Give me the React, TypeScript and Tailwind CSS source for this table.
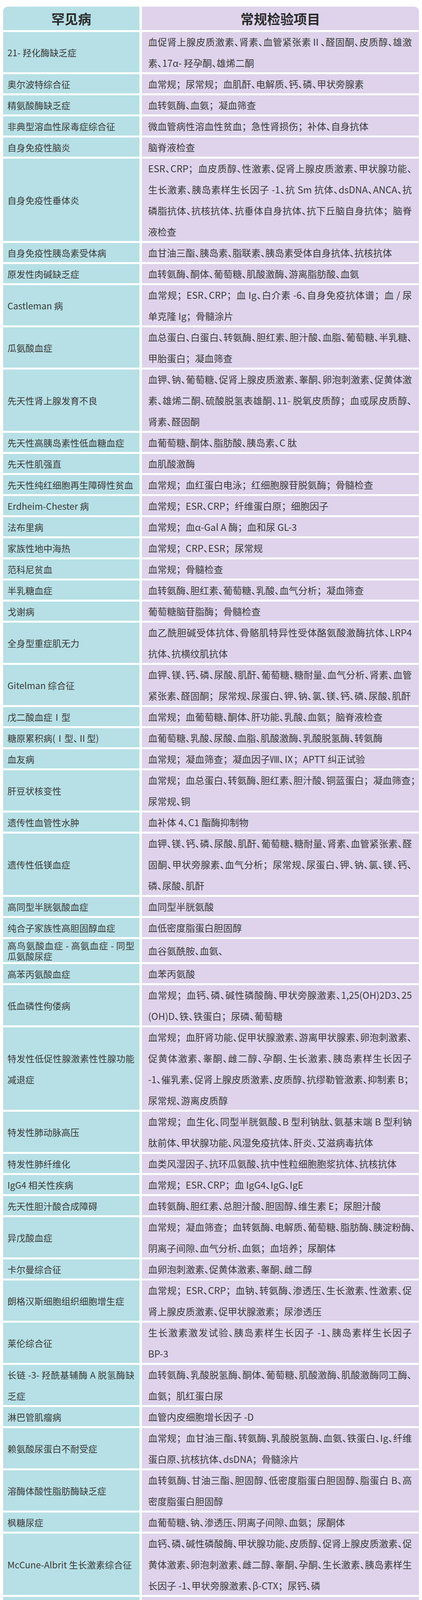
import { Fragment } from "react";
import clsx from "clsx";

type Row = { name: string[]; items: string[]; tight?: boolean; narrow?: boolean };

const rows: Row[] = [
  { name: ["21- 羟化酶缺乏症"], items: ["血促肾上腺皮质激素、肾素、血管紧张素Ⅱ、醛固酮、皮质醇、雄激", "素、17α- 羟孕酮、雄烯二酮"] },
  { name: ["奥尔波特综合征"], items: ["血常规；尿常规；血肌酐、电解质、钙、磷、甲状旁腺素"] },
  { name: ["精氨酸酶缺乏症"], items: ["血转氨酶、血氨；凝血筛查"] },
  { name: ["非典型溶血性尿毒症综合征"], items: ["微血管病性溶血性贫血；急性肾损伤；补体、自身抗体"] },
  { name: ["自身免疫性脑炎"], items: ["脑脊液检查"] },
  {
    name: ["自身免疫性垂体炎"],
    items: [
      "ESR、CRP；血皮质醇、性激素、促肾上腺皮质激素、甲状腺功能、",
      "生长激素、胰岛素样生长因子 -1、抗 Sm 抗体、dsDNA、ANCA、抗",
      "磷脂抗体、抗核抗体、抗垂体自身抗体、抗下丘脑自身抗体；脑脊",
      "液检查",
    ],
  },
  { name: ["自身免疫性胰岛素受体病"], items: ["血甘油三酯、胰岛素、脂联素、胰岛素受体自身抗体、抗核抗体"] },
  { name: ["原发性肉碱缺乏症"], items: ["血转氨酶、酮体、葡萄糖、肌酸激酶、游离脂肪酸、血氨"] },
  { name: ["Castleman 病"], items: ["血常规；ESR、CRP；血 Ig、白介素 -6、自身免疫抗体谱；血 / 尿", "单克隆 Ig；骨髓涂片"] },
  { name: ["瓜氨酸血症"], items: ["血总蛋白、白蛋白、转氨酶、胆红素、胆汁酸、血脂、葡萄糖、半乳糖、", "甲胎蛋白；凝血筛查"] },
  {
    name: ["先天性肾上腺发育不良"],
    items: [
      "血钾、钠、葡萄糖、促肾上腺皮质激素、睾酮、卵泡刺激素、促黄体激",
      "素、雄烯二酮、硫酸脱氢表雄酮、11- 脱氧皮质醇；血或尿皮质醇、",
      "肾素、醛固酮",
    ],
  },
  { name: ["先天性高胰岛素性低血糖血症"], items: ["血葡萄糖、酮体、脂肪酸、胰岛素、C 肽"] },
  { name: ["先天性肌强直"], items: ["血肌酸激酶"] },
  { name: ["先天性纯红细胞再生障碍性贫血"], items: ["血常规；血红蛋白电泳；红细胞腺苷脱氨酶；骨髓检查"] },
  { name: ["Erdheim-Chester 病"], items: ["血常规；ESR、CRP；纤维蛋白原；细胞因子"] },
  { name: ["法布里病"], items: ["血常规；血α-Gal A 酶；血和尿 GL-3"] },
  { name: ["家族性地中海热"], items: ["血常规；CRP、ESR；尿常规"] },
  { name: ["范科尼贫血"], items: ["血常规；骨髓检查"] },
  { name: ["半乳糖血症"], items: ["血转氨酶、胆红素、葡萄糖、乳酸、血气分析；凝血筛查"] },
  { name: ["戈谢病"], items: ["葡萄糖脑苷脂酶；骨髓检查"] },
  { name: ["全身型重症肌无力"], items: ["血乙酰胆碱受体抗体、骨骼肌特异性受体酪氨酸激酶抗体、LRP4", "抗体、抗横纹肌抗体"] },
  {
    name: ["Gitelman 综合征"],
    items: [
      "血钾、镁、钙、磷、尿酸、肌酐、葡萄糖、糖耐量、血气分析、肾素、血管",
      "紧张素、醛固酮；尿常规、尿蛋白、钾、钠、氯、镁、钙、磷、尿酸、肌酐",
    ],
  },
  { name: ["戊二酸血症Ⅰ型"], items: ["血常规；血葡萄糖、酮体、肝功能、乳酸、血氨；脑脊液检查"] },
  { name: ["糖原累积病(Ⅰ型、Ⅱ型)"], items: ["血葡萄糖、乳酸、尿酸、血脂、肌酸激酶、乳酸脱氢酶、转氨酶"] },
  { name: ["血友病"], items: ["血常规；凝血筛查；凝血因子Ⅷ、Ⅸ；APTT 纠正试验"] },
  { name: ["肝豆状核变性"], items: ["血常规；血总蛋白、转氨酶、胆红素、胆汁酸、铜蓝蛋白；凝血筛查；", "尿常规、铜"] },
  { name: ["遗传性血管性水肿"], items: ["血补体 4、C1 酯酶抑制物"] },
  {
    name: ["遗传性低镁血症"],
    items: [
      "血钾、镁、钙、磷、尿酸、肌酐、葡萄糖、糖耐量、肾素、血管紧张素、醛",
      "固酮、甲状旁腺素、血气分析；尿常规、尿蛋白、钾、钠、氯、镁、钙、",
      "磷、尿酸、肌酐",
    ],
  },
  { name: ["高同型半胱氨酸血症"], items: ["血同型半胱氨酸"] },
  { name: ["纯合子家族性高胆固醇血症"], items: ["血低密度脂蛋白胆固醇"] },
  { name: ["高鸟氨酸血症 - 高氨血症 - 同型", "瓜氨酸尿症"], items: ["血谷氨酰胺、血氨、"], tight: true },
  { name: ["高苯丙氨酸血症"], items: ["血苯丙氨酸"] },
  { name: ["低血磷性佝偻病"], items: ["血常规；血钙、磷、碱性磷酸酶、甲状旁腺激素、1,25(OH)2D3、25", "(OH)D、铁、铁蛋白；尿磷、葡萄糖"] },
  {
    name: ["特发性低促性腺激素性性腺功能", "减退症"],
    items: [
      "血常规；血肝肾功能、促甲状腺激素、游离甲状腺素、卵泡刺激素、",
      "促黄体激素、睾酮、雌二醇、孕酮、生长激素、胰岛素样生长因子",
      "-1、催乳素、促肾上腺皮质激素、皮质醇、抗缪勒管激素、抑制素 B；",
      "尿常规、游离皮质醇",
    ],
  },
  {
    name: ["特发性肺动脉高压"],
    items: ["血常规；血生化、同型半胱氨酸、B 型利钠肽、氨基末端 B 型利钠", "肽前体、甲状腺功能、风湿免疫抗体、肝炎、艾滋病毒抗体"],
  },
  { name: ["特发性肺纤维化"], items: ["血类风湿因子、抗环瓜氨酸、抗中性粒细胞胞浆抗体、抗核抗体"] },
  { name: ["IgG4 相关性疾病"], items: ["血常规；ESR、CRP；血 IgG4、IgG、IgE"] },
  { name: ["先天性胆汁酸合成障碍"], items: ["血转氨酶、胆红素、总胆汁酸、胆固醇、维生素 E；尿胆汁酸"] },
  {
    name: ["异戊酸血症"],
    items: ["血常规；凝血筛查；血转氨酶、电解质、葡萄糖、脂肪酶、胰淀粉酶、", "阴离子间隙、血气分析、血氨；血培养；尿酮体"],
  },
  { name: ["卡尔曼综合征"], items: ["血卵泡刺激素、促黄体激素、睾酮、雌二醇"] },
  {
    name: ["朗格汉斯细胞组织细胞增生症"],
    items: ["血常规；ESR、CRP；血钠、转氨酶、渗透压、生长激素、性激素、促", "肾上腺皮质激素、促甲状腺激素；尿渗透压"],
  },
  { name: ["莱伦综合征"], items: ["生长激素激发试验、胰岛素样生长因子 -1、胰岛素样生长因子", "BP-3"] },
  {
    name: ["长链 -3- 羟酰基辅酶 A 脱氢酶缺", "乏症"],
    items: ["血转氨酶、乳酸脱氢酶、酮体、葡萄糖、肌酸激酶、肌酸激酶同工酶、", "血氨；肌红蛋白尿"],
  },
  { name: ["淋巴管肌瘤病"], items: ["血管内皮细胞增长因子 -D"] },
  {
    name: ["赖氨酸尿蛋白不耐受症"],
    items: ["血常规；血甘油三酯、转氨酶、乳酸脱氢酶、血氨、铁蛋白、Ig、纤维", "蛋白原、抗核抗体、dsDNA；骨髓涂片"],
  },
  {
    name: ["溶酶体酸性脂肪酶缺乏症"],
    items: ["血转氨酶、甘油三酯、胆固醇、低密度脂蛋白胆固醇、脂蛋白 B、高", "密度脂蛋白胆固醇"],
  },
  { name: ["枫糖尿症"], items: ["血葡萄糖、钠、渗透压、阴离子间隙、血氨；尿酮体"] },
  {
    name: ["McCune-Albrit 生长激素综合征"],
    items: [
      "血钙、磷、碱性磷酸酶、甲状腺功能、皮质醇、促肾上腺皮质激素、促",
      "黄体激素、卵泡刺激素、雌二醇、睾酮、孕酮、生长激素、胰岛素样生",
      "长因子 -1、甲状旁腺激素、β-CTX；尿钙、磷",
    ],
  },
  { name: ["中链酰基辅酶 A 脱氢酶缺乏症"], items: ["血转氨酶、肌酸激酶、酮体、葡萄糖、血氨"] },
  {
    name: ["甲基丙二酸血症"],
    items: ["血和尿常规；血肝肾功能、同型半胱氨酸、血气分析、血氨、葡萄糖、", "电解质、血脂、白蛋白"],
  },
  { name: ["线粒体脑肌病"], items: ["血乳酸、丙酮酸"] },
  {
    name: ["多灶性运动神经病"],
    items: ["ESR；血和脑脊液抗神经节苷脂抗体；脑脊液检查；血 ANCA、", "抗核抗体、ENA、甲状腺功能、ACE"],
  },
  { name: ["多种酰基辅酶 A 脱氢酶缺乏症"], items: ["血酮体、葡萄糖、血氨、肌酸激酶、转氨酶；凝血筛查"] },
  { name: ["多发性硬化"], items: ["脑脊液检查"] },
  { name: ["强直性肌营养不良"], items: ["血葡萄糖、肌酸激酶、钙、磷、甲状腺功能、性激素"] },
  { name: ["N- 乙酰谷氨酸合成酶缺乏症"], items: ["血葡萄糖、转氨酶、肌酐、尿素、血氨、血气分析"] },
  { name: ["新生儿糖尿病"], items: ["血葡萄糖、胰岛素、C 肽、渗透压、电解质；尿常规"] },
  { name: ["视神经脊髓炎"], items: ["血特异性水通道蛋白 4 IgG"] },
  {
    name: ["尼曼匹克病"],
    items: ["血常规；血转氨酶、甘油三酯、高密度脂蛋白胆固醇、低密度脂蛋", "白胆固醇、酸性鞘磷脂酶、壳三糖苷酶"],
  },
  { name: ["鸟氨酸氨甲酰基转移酶缺乏症"], items: ["血氨"] },
  { name: ["帕金森病(青年型、早发型)"], items: ["血常规；血铜蓝蛋白、铁蛋白"] },
  {
    name: ["阵发性睡眠性血红蛋白尿症"],
    items: [
      "血常规；血乳酸脱氢酶、胆红素、结合珠蛋白、铁；骨髓检查；酸",
      "化血清溶血试验、糖水溶血试验、蛇毒因子溶血试验、补体溶血敏",
      "感试验；GPI 锚连蛋白、气单胞菌溶素前体的变异体",
    ],
  },
  { name: ["苯丙酮尿症"], items: ["血苯丙氨酸"] },
  { name: ["POEMS 综合征"], items: ["血蛋白电泳、游离轻链；血 / 尿免疫固定电泳；骨髓检查"] },
  { name: ["卟啉病"], items: ["尿卟胆原；红细胞内原卟啉测定"] },
  {
    name: ["普拉德 - 威利综合征"],
    items: [
      "血常规；血肝肾功能、尿酸、血脂、葡萄糖、糖化血红蛋白、胰岛素、",
      "甲状腺功能、胰岛素样生长因子 -1、皮质醇、促肾上腺皮质激素、",
      "睾酮、雌二醇、促黄体激素、卵泡刺激素",
    ],
  },
  { name: ["原发性联合免疫缺陷病"], items: ["血常规；血淋巴细胞分型、Ig、T 细胞受体重排删除环"] },
  { name: ["原发性遗传性肌张力不全"], items: ["血铜蓝蛋白"] },
  { name: ["原发性轻链型淀粉样变"], items: ["单克隆 Ig 鉴定"] },
  { name: ["进行性家族性肝内胆汁淤积症"], items: ["血胆固醇、转氨酶、胆红素、胆汁酸、碱性磷酸酶、甲胎蛋白"] },
  { name: ["Duchenne/Becker 型肌营养不良"], items: ["血转氨酶、肌酸激酶、乳酸脱氢酶、羟丁酸脱氢酶、肌红蛋白"] },
  { name: ["丙酸血症"], items: ["血常规；血葡萄糖、心肌酶、乳酸、血氨、血气分析；尿酮体"] },
  { name: ["肺泡蛋白沉积症"], items: ["血乳酸脱氢酶、癌胚抗原、细胞角蛋白 19、黏蛋白 KL-6"] },
  {
    name: ["囊性纤维化"],
    items: [
      "血常规；血钠、氯、葡萄糖、肝功能、IgE、曲霉菌特异性 IgE、维生",
      "素 A、维生素 D；汗液氯；粪便弹性蛋白酶、脂肪苏丹Ⅲ染色；呼",
      "吸道病原体检查；精液分析",
    ],
  },
  { name: ["重症先天性粒细胞缺乏症"], items: ["血常规；骨髓检查"] },
  {
    name: ["镰刀型细胞贫血病"],
    items: ["血常规；骨髓检查；血胆红素、乳酸脱氢酶、结合珠蛋白、游离血", "红蛋白；血红蛋白电泳；红细胞渗透脆性"],
  },
  { name: ["拉塞尔 - 西尔弗综合征"], items: ["血葡萄糖"] },
  { name: ["谷固醇血症"], items: ["血常规、血细胞形态；血胆固醇"] },
  {
    name: ["脊髓延髓肌萎缩症"],
    items: ["血肌酸肌酶、乳酸脱氢酶、睾酮、孕酮、促卵泡激素、促黄体激素；", "脑脊液检查"],
  },
  { name: ["脊髓性肌萎缩症"], items: ["血肌酸激酶"] },
  { name: ["系统性硬化症"], items: ["抗核抗体、抗着丝点抗体、抗拓扑异构酶Ⅰ抗体、抗 RNA 聚合酶", "Ⅲ抗体"] },
  { name: ["四氢生物喋呤缺乏症"], items: ["血苯丙氨酸"] },
  {
    name: ["酪氨酸血症"],
    items: ["血常规；血白蛋白、胆红素、转氨酶、磷、碱性磷酸酶、甲胎蛋白；", "尿常规；凝血筛查；凝血因子 II、VII、IX、XI"],
  },
  {
    name: ["极长链酰基辅酶 A 脱氢酶缺乏症"],
    items: ["血转氨酶、乳酸脱氢酶、酮体、葡萄糖、肌酸激酶、肌酸激酶同工酶；", "肌红蛋白尿、尿常规"],
  },
  { name: ["威廉姆斯综合征"], items: ["血钙、离子钙、甲状腺功能；尿钙、肌酐"] },
  { name: ["湿疹 - 血小板减少 - 免疫缺陷综合征"], items: ["血常规；血 Ig、细胞免疫"], narrow: true },
  { name: ["X 连锁肾上腺脑白质营养不良"], items: ["血促肾上腺皮质激素、皮质醇；尿皮质醇、17- 羟皮质醇"] },
  { name: ["X 连锁无丙种球蛋白血症"], items: ["血 IgG、IgA、CD19+B 淋巴细胞"] },
  { name: ["X 连锁淋巴增生症"], items: ["血常规；血 T、B 细胞数、IgG、IgM"] },
];

// the source font sets the enumeration comma at half width
function Txt({ text }: { text: string }) {
  const parts = text.split("、");
  return (
    <>
      {parts.map((p, i) => (
        <Fragment key={i}>
          {p}
          {i < parts.length - 1 && <span className="tracking-[-0.5em]">、</span>}
        </Fragment>
      ))}
    </>
  );
}

function Lines({ lines }: { lines: string[] }) {
  return (
    <>
      {lines.map((l, i) => (
        <div
          key={i}
          className={clsx("whitespace-nowrap", i < lines.length - 1 && "text-justify [text-align-last:justify]")}
        >
          <Txt text={l} />
        </div>
      ))}
    </>
  );
}

function TableRow({ row, last }: { row: Row; last: boolean }) {
  return (
    <div className="grid grid-cols-[349px_709px] gap-x-[6px]">
      <div
        className={clsx(
          "flex items-center bg-[#b6e0e5] pl-[11px] pr-[13px] text-[23px]",
          row.tight && "py-[2.5px]",
          last && "rounded-bl-[12px]"
        )}
      >
        <div
          className={clsx(
            "w-full",
            row.tight ? "leading-[27px]" : "-my-[2.5px] leading-[54px]",
            row.narrow && "tracking-[-0.05em]"
          )}
        >
          <Lines lines={row.name} />
        </div>
      </div>
      <div className={clsx("flex items-center bg-[#ded3eb] pl-4 pr-[18px] text-[24px]", last && "rounded-br-[12px]")}>
        <div className="-my-[2.5px] w-full leading-[54px]">
          <Lines lines={row.items} />
        </div>
      </div>
    </div>
  );
}

export default function App() {
  return (
    <div className="min-h-screen bg-white px-[8px] pt-[17px] font-['Noto_Sans_CJK_SC','Noto_Sans',sans-serif] text-[#3b3b3b]">
      <div className="flex w-[1064px] flex-col gap-[5px]">
        <div className="grid h-[60px] grid-cols-[349px_709px] gap-x-[6px] text-[34px] font-bold text-[#2c2c2c]">
          <div className="flex items-center justify-center rounded-tl-[12px] bg-[#b6e0e5]">罕见病</div>
          <div className="flex items-center justify-center rounded-tr-[12px] bg-[#ded3eb]">常规检验项目</div>
        </div>
        {rows.map((row, i) => (
          <TableRow key={i} row={row} last={i === rows.length - 1} />
        ))}
      </div>
    </div>
  );
}
